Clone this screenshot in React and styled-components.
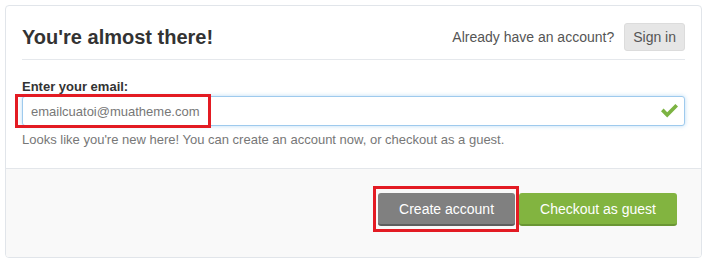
import React from "react";
import styled, { createGlobalStyle } from "styled-components";

const Global = createGlobalStyle`
  html, body { margin: 0; padding: 0; background: #fff; }
  body { font-family: "Liberation Sans", Arial, sans-serif; }
  * { box-sizing: border-box; }
`;

const Page = styled.div`
  padding: 5px;
`;

const Panel = styled.div`
  width: 697px;
  border: 1px solid #e1e5ea;
  border-radius: 4px;
  background: #fff;
  overflow: hidden;
`;

const Body = styled.div`
  padding: 17px 16px 19px 16px;
`;

const Header = styled.div`
  display: flex;
  align-items: center;
  justify-content: space-between;
  padding-bottom: 8px;
  border-bottom: 1px solid #e5e8ec;
`;

const Title = styled.h2`
  margin: 0;
  font-size: 20px;
  font-weight: bold;
  color: #333;
  line-height: 24px;
`;

const SignInGroup = styled.div`
  display: flex;
  align-items: center;
  gap: 10px;
  font-size: 14px;
  color: #555;
`;

const SmallButton = styled.button`
  height: 28px;
  padding: 0 8px;
  font-family: inherit;
  font-size: 14px;
  color: #555;
  background: #e6e6e6;
  border: 1px solid #dcdcdc;
  border-radius: 3px;
`;

const Label = styled.label`
  display: block;
  margin-top: 18px;
  font-size: 13px;
  line-height: 18px;
  font-weight: bold;
  color: #333;
`;

const Field = styled.div`
  position: relative;
  height: 30px;
`;

const Input = styled.input`
  width: 100%;
  height: 30px;
  padding: 0 30px 0 8px;
  font-family: inherit;
  font-size: 13px;
  color: #777;
  border: 1px solid #9ecaed;
  border-radius: 3px;
  box-shadow: 0 0 4px rgba(102, 175, 233, 0.45);
  outline: none;
`;

const CheckIcon = styled.svg`
  position: absolute;
  right: 6px;
  top: 7px;
  width: 19px;
  height: 15px;
`;

const Highlight = styled.div`
  position: absolute;
  border: 3px solid #e31b23;
  pointer-events: none;
  left: ${(p) => p.$left}px;
  top: ${(p) => p.$top}px;
  width: ${(p) => p.$w}px;
  height: ${(p) => p.$h}px;
`;

const Help = styled.p`
  margin: 5px 0 0;
  font-size: 13px;
  line-height: 18px;
  color: #777;
`;

const Footer = styled.div`
  display: flex;
  justify-content: flex-end;
  align-items: flex-start;
  gap: 4px;
  padding: 24px 24px 31px;
  background: #f9f9f9;
  border-top: 1px solid #e3e6ea;
`;

const ButtonWrap = styled.div`
  position: relative;
  display: flex;
`;

const ActionButton = styled.button`
  height: 33px;
  padding: 0 21px;
  font-family: inherit;
  font-size: 14px;
  color: #fff;
  border: none;
  border-bottom: 2px solid ${(p) => p.$shade};
  border-radius: 3px;
  background: ${(p) => p.$bg};
`;

export default function App() {
  return (
    <Page>
      <Global />
      <Panel>
        <Body>
          <Header>
            <Title>You're almost there!</Title>
            <SignInGroup>
              <span>Already have an account?</span>
              <SmallButton>Sign in</SmallButton>
            </SignInGroup>
          </Header>
          <Label>Enter your email:</Label>
          <Field>
            <Input defaultValue="emailcuatoi@muatheme.com" />
            <CheckIcon viewBox="0 0 19 15">
              <path
                d="M1 8.2 L3.6 5.6 L7.2 9.2 L15.4 1 L18 3.6 L7.2 14.4 Z"
                fill="#7cb342"
              />
            </CheckIcon>
            <Highlight $left={-7} $top={-2} $w={196} $h={34} />
          </Field>
          <Help>
            Looks like you're new here! You can create an account now, or checkout as a guest.
          </Help>
        </Body>
        <Footer>
          <ButtonWrap>
            <ActionButton $bg="#808080" $shade="#5e5e5e">Create account</ActionButton>
            <Highlight $left={-5} $top={-7} $w={146} $h={46} />
          </ButtonWrap>
          <ActionButton $bg="#82b440" $shade="#6a9634">Checkout as guest</ActionButton>
        </Footer>
      </Panel>
    </Page>
  );
}
